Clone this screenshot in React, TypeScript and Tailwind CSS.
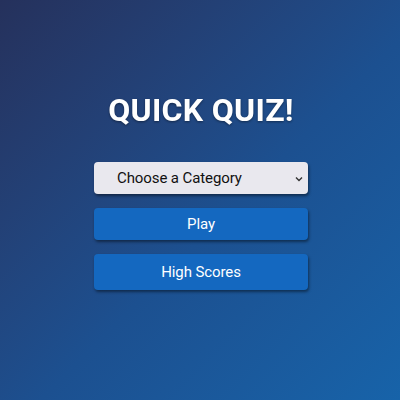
export default function App() {
  return (
    <div
      className="w-[400px] h-[400px] bg-gradient-to-br from-[#25315c] via-[#1c5090] via-55% to-[#1763a9] flex flex-col items-center pl-[2px] pt-[91px]"
      style={{ fontFamily: "Roboto, 'Liberation Sans', sans-serif" }}
    >
      <h1 className="text-[32px] leading-[38px] font-bold text-white tracking-[0.3px] drop-shadow-[0_1px_1px_rgba(0,0,0,0.4)]">
        QUICK QUIZ!
      </h1>
      <div className="mt-[33px] w-[214px] flex flex-col gap-[14px]">
        <div className="relative">
          <select
            defaultValue=""
            className="appearance-none w-full h-[32px] rounded-[4px] bg-[#e9e8ee] text-[#111] text-[15px] tracking-[-0.1px] pt-[1px] pl-[23px] pr-6 shadow-[1px_2px_3px_rgba(0,0,0,0.45)] outline-none"
          >
            <option value="">Choose a Category</option>
          </select>
          <svg
            className="absolute right-[5px] top-[14px] w-[8px] h-[6px] pointer-events-none"
            viewBox="0 0 8 6"
            fill="none"
            stroke="#333"
            strokeWidth="1.4"
          >
            <path d="M1 1.5 L4 4.5 L7 1.5" />
          </svg>
        </div>
        <button className="w-full h-[32px] rounded-[4px] bg-[#1468c0] text-white text-[15px] tracking-[-0.1px] shadow-[1px_2px_3px_rgba(0,0,0,0.45)]">
          Play
        </button>
        <button className="w-full h-[36px] rounded-[4px] bg-[#1468c0] text-white text-[15px] tracking-[-0.1px] shadow-[1px_2px_3px_rgba(0,0,0,0.45)]">
          High Scores
        </button>
      </div>
    </div>
  );
}
